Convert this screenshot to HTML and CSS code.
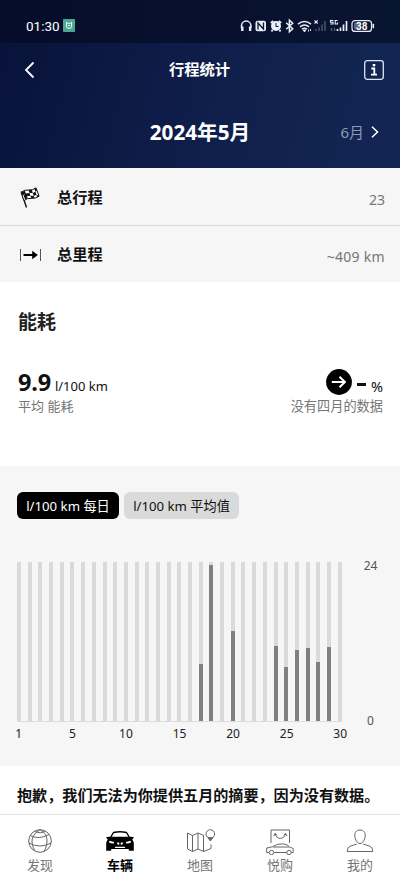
FILE: index.html
```html
<!DOCTYPE html>
<html lang="zh-CN">
<head>
<meta charset="utf-8">
<title>行程统计</title>
<link rel="stylesheet" href="styles.css">
</head>
<body>
<div class="top">
  <div class="status">
    <span class="time">01:30</span>
    <svg class="app" width="12" height="13" viewBox="0 0 12 13"><rect width="12" height="13" rx=".8" fill="#4fa594"/><path d="M3.4 3.2v4.2q0 2 2.6 2t2.6-2V3.2L7.300 4.300H4.700zM4.800 6.300q1.200.900 2.400 0" fill="none" stroke="#e4fff8" stroke-width="1"/></svg>
    <svg class="signals" width="136" height="16" viewBox="0 0 136 16" fill="none" stroke="#e9eef8">
      <path d="M1.500 10V7.800a4.700 4.700 0 0 1 9.400 0V10" stroke-width="1.500"/><path d="M2.300 8.500v4.500M10.100 8.500v4.500" stroke-width="2.400"/>
      <rect x="15.500" y="2.800" width="10.500" height="10.500" rx="2" fill="#e9eef8" stroke="none"/><path d="M18 11.500V5l5.500 6V4.500" stroke="#09142f" stroke-width="1.300"/>
      <circle cx="36" cy="8" r="5" fill="#e9eef8" stroke="none"/><path d="m30.800 5 2.500-2M41.200 5l-2.500-2M32.500 12l-1 1.500M39.500 12l1 1.500" stroke-width="1.900"/><path d="M36 5v3.500h2.500" stroke="#09142f"/>
      <path d="m46.200 4.800 6.500 6-3.300 3V2.200l3.300 3-6.500 6" stroke-width="1.500"/>
      <path d="M58 6.200q6.300-5.200 13 0M60 8.800q4.500-3.700 9 0M62 11.200q2.500-1.900 5 0" stroke-width="1.500"/><path d="m64.500 14-1.300-2h2.600zM68.500 11.500v2M70.500 11v2" fill="#e9eef8" stroke-width=".9"/>
      <path d="m74.500 2.300 3.200 3.200m0-3.200-3.200 3.200" stroke-width="1.100"/><path d="M76 13v-2M79 13V9.500M82 13V6.500M85 13V3" stroke="#44506b" stroke-width="1.600"/>
      <path d="M93.500 2.500h-3v1.800H93v1.700h-2.700M97.500 2.500h-2.300V6h2.300V4.500" stroke-width="1.100"/><path d="M91.500 13v-3M94.500 13v-3" stroke="#56627c" stroke-width="1.200"/><path d="M97.500 13v-2M100.500 13V9.500M103.500 13V6.500M106.500 13V3" stroke-width="1.700"/>
      <rect x="112" y="2.600" width="19.500" height="10.800" rx="3" stroke-width="1.200"/><rect x="114" y="4.500" width="7" height="7" fill="#59657e" stroke="none"/><path d="M133.300 5.800v4.400" stroke-width="1.600"/><text class="battery" x="121.800" y="11.800" text-anchor="middle">38</text>
    </svg>
  </div>
  <header class="bar">
    <svg class="back" width="12" height="18" viewBox="0 0 12 18"><path d="M10.500 1.500 3 9l7.500 7.500" fill="none" stroke="#fff" stroke-width="1.800"/></svg>
    <h1>行程统计</h1>
    <svg class="info" width="20" height="20" viewBox="0 0 20 20"><rect x=".7" y=".7" width="18.600" height="18.600" rx="2.500" fill="none" stroke="#dde5f2" stroke-width="1.300"/><rect x="8.700" y="4" width="2.600" height="2.300" fill="#fff"/><path d="M7.300 8.500h3v6M7 14.700h6" fill="none" stroke="#fff" stroke-width="1.800"/></svg>
  </header>
  <div class="month"><h2>2024年5月</h2><span class="next">6月<svg width="8" height="12" viewBox="0 0 8 12"><path d="m1 .8 5.500 5.200L1 11.200" fill="none" stroke="#fff" stroke-width="1.500"/></svg></span></div>
</div>
<div class="row first">
  <svg width="24" height="24" viewBox="0 0 24 24"><path d="m3.200 6.500 5.300 16" stroke="#111" stroke-width="1.400"/><path d="M3.200 7.500q3-3 7.300-2.500 4.500.5 7.500-2.200l3.100 8.400q-3.500 2.500-7.200 2.100-5-.5-8 2.300z" fill="#fff" stroke="#111"/><path d="m3.500 7.500 3.300-2 1 3-3.300 2zM10.500 5l3.300.1 1 3-3.300-.2zM16.500 4l1.500-1 .9 2.800-1.500 1zM7.800 8.500l3.700-.6.900 2.800-3.600.6zM14.800 8.100l2.700-1.300.9 2.900-2.700 1.200zM5.600 10.400l2.200-1.900 1 2.800-2.300 1.500zM12.400 10.700l3.300.2.800 2.200-3.300.2zM8.800 11.300l.9 2-2.700 1-.6-1.800zM18.400 9.700l2.300.9.300.7-2 1z" fill="#111"/></svg>
  <b>总行程</b><span>23</span>
</div>
<div class="row">
  <svg width="24" height="24" viewBox="0 0 24 24"><path d="M2.500 7v12M22.500 7v12" stroke="#555" stroke-width="1"/><path d="M5.500 11.900h8.700V8.700l5.600 4.300-5.600 4.300v-3.200H5.500z"/></svg>
  <b>总里程</b><span class="distance">~409 km</span>
</div>
<section class="usage">
  <h3>能耗</h3>
  <div class="figures">
    <div><p class="value"><strong>9.9</strong><span>l/100 km</span></p><p class="note">平均 能耗</p></div>
    <div class="right"><p class="value"><svg width="26" height="26" viewBox="0 0 26 26"><circle cx="13" cy="13" r="12.900"/><path d="M5.800 13h13M13.500 7.700l5.400 5.300-5.400 5.300" fill="none" stroke="#fff" stroke-width="2"/></svg><i class="dash"></i><span>%</span></p><p class="note">没有四月的数据</p></div>
  </div>
</section>
<section class="chart">
  <div class="tabs"><span class="tab on">l/100 km 每日</span><span class="tab">l/100 km 平均值</span></div>
  <div class="plot">
    <div class="bars" id="bars"></div>
    <div class="scale"><span>24</span><span>0</span></div>
  </div>
  <div class="days"><span>1</span><span>5</span><span>10</span><span>15</span><span>20</span><span>25</span><span>30</span></div>
</section>
<p class="summary">抱歉，我们无法为你提供五月的摘要，因为没有数据。</p>
<nav>
  <a><svg viewBox="0 0 30 28"><circle cx="15" cy="14" r="11.300"/><path d="M15 2.700c-9 5-10 13-5 21.200M15 2.700c8 4 9 13 4 21.700M5 8.500q9 4.500 19-1M3.800 16q11 6 22.400 0M9.500 4.500q6 2.800 10.500 0"/></svg>发现</a>
  <a class="active"><svg viewBox="0 0 30 28"><path d="M5.500 10.500 8.500 5.500q6.500-1.500 13 0l3 5" stroke="#000" stroke-width="1.400"/><path d="M1 10.300 4 9.800h22l3 .5L27.300 12.500l1.500 3v8.300h-5V22H6.200v1.800H1.200v-8.300l1.500-3z" fill="#000" stroke="none"/><path d="m4 13.800 5 1.300v1.500l-4.500-.7zM26 13.800l-5 1.300v1.500l4.500-.7zM11.700 15.500h2.600v2.300h-1.500zM15.700 15.500h2.600l-1.100 2.300h-1.500zM10 19.800h10v1.200H10z" fill="#fff" stroke="none"/></svg>车辆</a>
  <a><svg viewBox="0 0 30 28"><path d="M19 8.500 13 6 7.500 8.500 2.500 6v16l5 2.500L13 22l5.500 2.500 7.500-3v-4M7.500 8.500v16M13 6v16M18.500 8.500v16"/><circle cx="25.300" cy="7" r="4.300"/><path d="m23 10.700 2.300 3.300 2.500-3.300z" fill="#666"/></svg>地图</a>
  <a><svg viewBox="0 0 30 28"><path d="M6 16V3h18.500v13"/><path d="M10.200 6.500c.5 6.500 9.700 6.500 10.200 0M8.800 9l1.400-2.700L12 8.500M18.800 8.500l1.600-2.200L22 9"/><path d="M4 25.500H1.700V21l6-1.300q5-3.500 10.500-2.800 4.200.2 6.500 3.100l3.500 1.500v4h-2M9 25.500h13M8 20h16"/><circle cx="6.500" cy="25.500" r="2.200"/><circle cx="24" cy="25.500" r="2.200"/></svg>悦购</a>
  <a><svg viewBox="0 0 30 28"><path d="M15 3c-3.800 0-5.500 2.700-5.200 6 .3 4 2.500 7.500 5.200 7.500s4.900-3.500 5.200-7.500c.3-3.300-1.400-6-5.200-6zM11.800 17 5 19.300q-2.800 1-2.800 5.200h25.600q0-4.200-2.800-5.200L18.200 17"/></svg>我的</a>
</nav>
<script src="chart.js"></script>
</body>
</html>
```
FILE: styles.css
```css
* { box-sizing: border-box; }
body { margin: 0; width: 400px; height: 884px; overflow: hidden; background: #fff; color: #111; font-family: "Noto Sans", "Noto Sans CJK SC", sans-serif; }
h1, h2, h3, p { margin: 0; }
svg { display: block; flex: none; }
.top { height: 168px; color: #fff; background: linear-gradient(105deg, #08123a, #10204c 60%, #132653); }
.status { height: 43px; padding: 8px 24px 0 26px; display: flex; align-items: center; background: linear-gradient(90deg, #060c2b, #081531); }
.time { width: 37px; font: 13.5px "Roboto", sans-serif; white-space: nowrap; }
.signals { margin-left: auto; }
.battery { font: bold 10px "Roboto", sans-serif; fill: #fff; stroke: none; }
.bar { height: 53px; padding: 0 16px 0 23px; display: flex; align-items: center; justify-content: space-between; }
h1 { font-size: 15.3px; line-height: 22px; margin: -2px 0 0; }
.month { height: 72px; display: grid; grid-template-columns: 1fr auto 1fr; align-items: center; }
h2 { grid-column: 2; font-size: 20.7px; line-height: 28px; white-space: nowrap; }
.next { justify-self: end; margin-right: 21px; display: flex; align-items: center; gap: 7px; color: #8e9ab5; font-size: 15px; line-height: 20px; }
.row { height: 57px; padding: 0 15px 0 18px; display: flex; align-items: center; background: #f6f6f6; }
.row.first { height: 58px; border-bottom: 1px solid #d9d9d9; }
.row.first + .row { height: 56px; }
.row b { margin-left: 15px; font-size: 15.2px; line-height: 22px; }
.row span { margin: 5px 0 0 auto; color: #757575; font-size: 14px; }
.row .distance { letter-spacing: .3px; }
.usage { height: 184px; padding: 26px 17px 0 18px; }
h3 { font-size: 19px; line-height: 28px; color: #222; }
.figures { display: flex; justify-content: space-between; margin-top: 31px; }
.value { height: 30px; display: flex; align-items: baseline; gap: 4px; font-size: 14px; line-height: 30px; white-space: nowrap; }
.value strong { font-size: 23.5px; letter-spacing: -.2px; }
.value span { font-size: 13px; }
.right .value { align-items: center; justify-content: flex-end; gap: 5px; }
.right .value span { margin-top: 7px; font-size: 14.5px; }
.dash { width: 9px; height: 3px; background: #111; margin-top: 4px; }
.note { margin-top: -1px; font-size: 13px; line-height: 20px; color: #757575; }
.right { text-align: right; }
.right .note { font-size: 13.200px; }
.chart { height: 300px; padding-top: 26px; background: #f6f6f6; }
.tabs { display: flex; gap: 5px; margin-left: 17px; }
.tab { width: 115px; height: 27px; border-radius: 6px; background: #dadada; font-size: 13.2px; line-height: 28px; text-align: center; white-space: nowrap; }
.tab.on { width: 102px; background: #000; color: #fff; }
.plot { display: flex; margin: 43px 0 0 17px; }
.bars { width: 325px; height: 160px; display: flex; justify-content: space-between; border-bottom: 1px solid #dcdcdc; }
.day { width: 4px; display: flex; align-items: flex-end; background: #dadada; }
.fill { width: 4px; background: #808080; }
.scale { width: 57px; height: 173px; margin: -5px 0 -8px; display: flex; flex-direction: column; justify-content: space-between; align-items: center; font-size: 12px; line-height: 18px; color: #555; }
.days { width: 375px; margin: 3px 0 0 -8px; display: grid; grid-template-columns: repeat(7, 1fr); text-align: center; font-size: 12px; line-height: 18px; color: #222; }
.summary { height: 49px; padding: 17px 0 0 17px; font-size: 15.1px; font-weight: bold; line-height: 24px; white-space: nowrap; border-bottom: 1px solid #e4e4e4; }
nav { height: 69px; display: grid; grid-template-columns: repeat(5, 1fr); padding-top: 12px; }
nav a { display: flex; flex-direction: column; align-items: center; font-size: 13px; line-height: 20px; color: #757575; }
nav svg { width: 30px; height: 28px; fill: none; stroke: #666; stroke-width: 1; }
nav .active { color: #000; font-weight: bold; }
```
FILE: chart.js
```javascript
const heights = { 17: 57, 18: 156, 20: 90, 24: 75, 25: 54, 26: 71, 27: 73, 28: 59, 29: 74 };
const bars = document.getElementById('bars');
for (let i = 0; i <= 30; i++) {
  const day = document.createElement('div');
  day.className = 'day';
  if (heights[i]) {
    const fill = document.createElement('div');
    fill.className = 'fill';
    fill.style.height = heights[i] + 'px';
    day.append(fill);
  }
  bars.append(day);
}
```
